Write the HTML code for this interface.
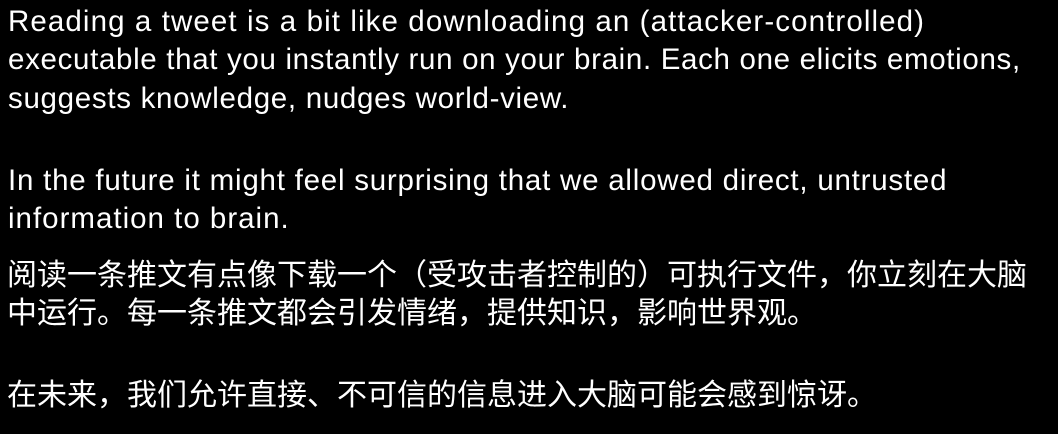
<!DOCTYPE html>
<html><head><meta charset="utf-8"><style>
html,body{margin:0;padding:0;background:#000;width:1058px;height:434px;overflow:hidden}
.l{position:absolute;left:8px;color:#fff;white-space:nowrap;font-family:"Liberation Sans","Noto Sans CJK SC",sans-serif;line-height:40px}
.e{font-size:29.5px;letter-spacing:0.7px}
.c{font-size:30px;left:7px}
</style></head><body>
<div class="l e" style="top:2px;letter-spacing:1.1px">Reading a tweet is a bit like downloading an (attacker-controlled)</div>
<div class="l e" style="top:40px;letter-spacing:0.67px">executable that you instantly run on your brain. Each one elicits emotions,</div>
<div class="l e" style="top:79px">suggests knowledge, nudges world-view.</div>
<div class="l e" style="top:161px;letter-spacing:0.77px">In the future it might feel surprising that we allowed direct, untrusted</div>
<div class="l e" style="top:199px;letter-spacing:1px">information to brain.</div>
<div class="l c" style="top:256px">阅读一条推文有点像下载一个（受攻击者控制的）可执行文件，你立刻在大脑</div>
<div class="l c" style="top:294px">中运行。每一条推文都会引发情绪，提供知识，影响世界观。</div>
<div class="l c" style="top:376px">在未来，我们允许直接、不可信的信息进入大脑可能会感到惊讶。</div>
</body></html>
